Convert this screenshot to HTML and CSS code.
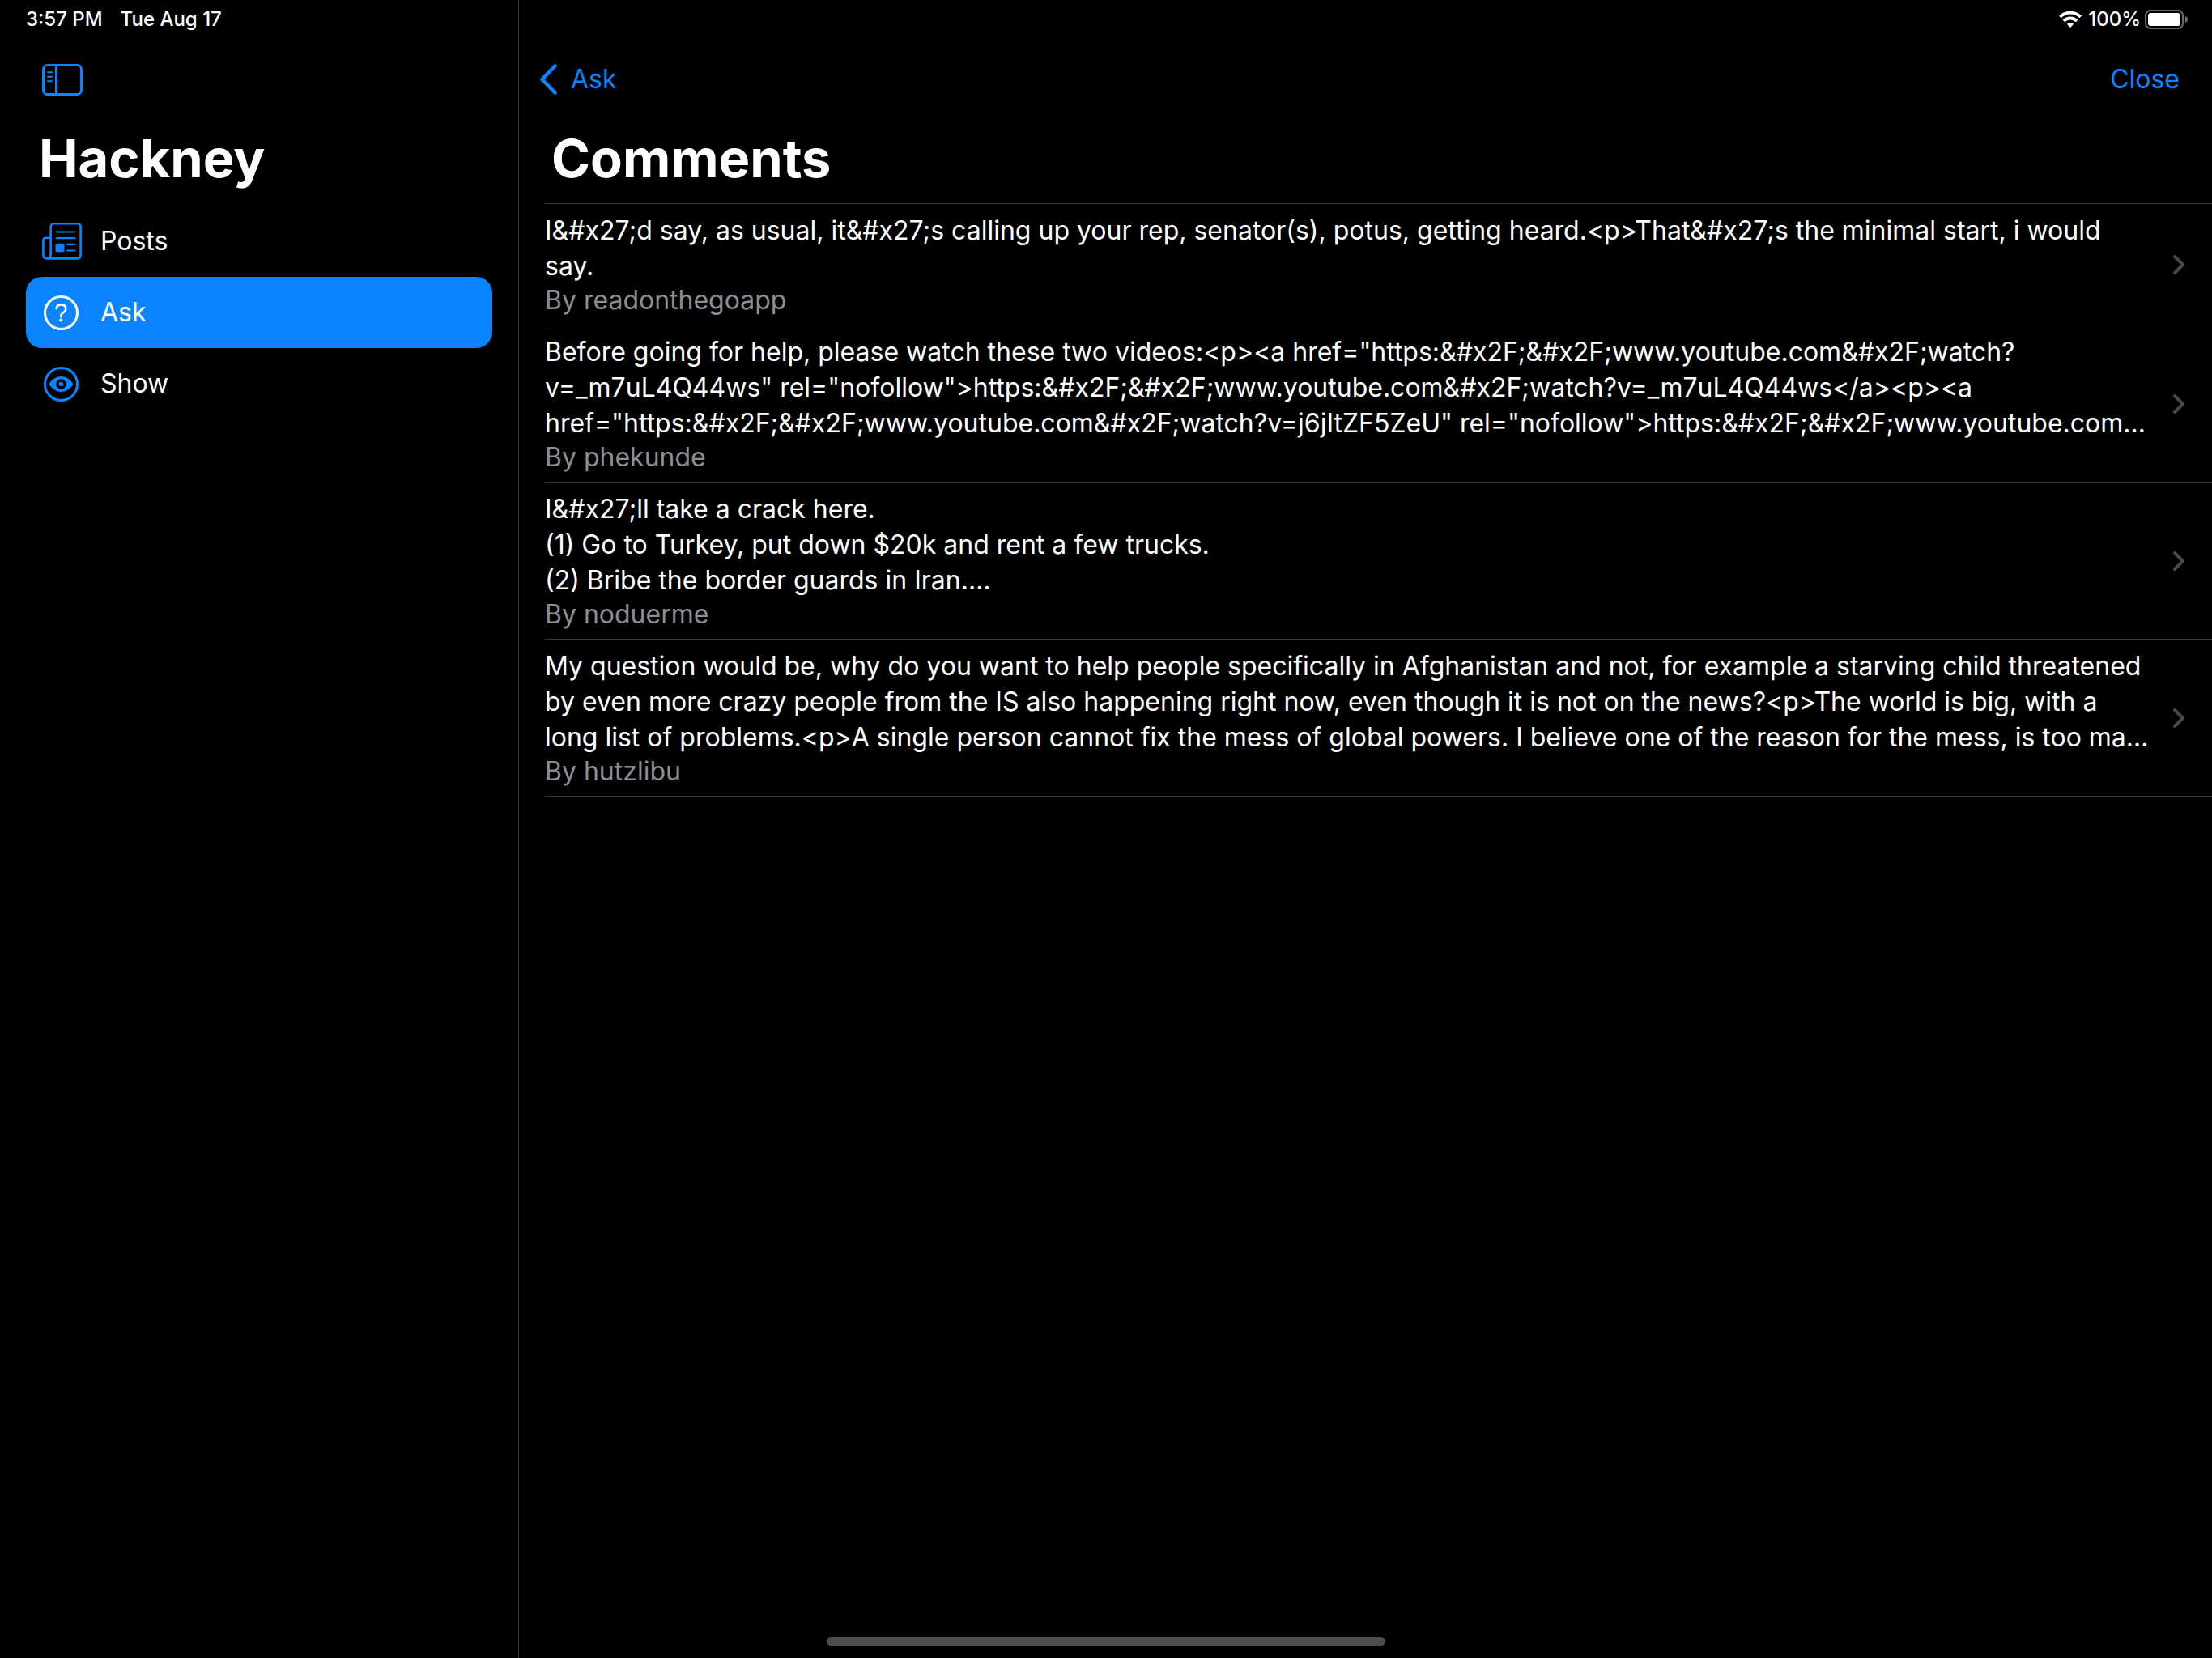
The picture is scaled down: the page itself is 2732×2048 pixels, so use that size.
FILE: index.html
```html
<!DOCTYPE html>
<html lang="en">
<head>
<meta charset="utf-8">
<meta name="viewport" content="width=device-width, initial-scale=1">
<title>Hackney</title>
<link rel="stylesheet" href="styles.css">
</head>
<body>
<div class="app">
  <aside class="sidebar">
    <div class="status"><span>3:57 PM</span><span>Tue Aug 17</span></div>
    <div class="toolbar toolbar-side">
      <button class="tool" type="button" aria-label="Toggle sidebar">
        <svg width="50" height="39" viewBox="0 0 50 39" fill="none" stroke="currentColor" stroke-width="3">
          <rect x="1.5" y="1.5" width="47" height="36" rx="5"/>
          <path d="M17.5 1.5v36"/>
          <path d="M7 10.2h5M7 15.7h5M7 21.2h5" stroke-width="2" stroke-linecap="round"/>
        </svg>
      </button>
    </div>
    <h1 class="title">Hackney</h1>
    <nav class="menu">
      <a class="item" href="#posts">
        <svg class="icon" width="50" height="48" viewBox="0 0 50 48" fill="none" stroke="currentColor" stroke-width="2.6">
          <path d="M10.6 41V6.500q0-4.200 4.200-4.200h28.600q4.200 0 4.200 4.200V41q0 4.400-4.400 4.400H6q-4.600 0-4.600-4.400V23.500q0-3.700 3.700-3.700h5.500"/>
          <path d="M10.600 40.500q0 4.900-4.600 4.900"/>
          <path d="M18 12.500h22.500M18 20.200h22.500M31 27.800h9.500M31 35.500h9.500" stroke-width="2.200" stroke-linecap="round"/>
          <rect x="16.500" y="26.700" width="11" height="10.500" rx="2.500" fill="currentColor" stroke="none"/>
        </svg>
        <span>Posts</span>
      </a>
      <a class="item selected" href="#ask" aria-current="page">
        <svg class="icon" width="50" height="48" viewBox="0 0 50 48" fill="none" stroke="currentColor" stroke-width="3">
          <circle cx="23.500" cy="24.500" r="20"/>
          <path d="M17.700 19.200q.5-4.800 5.700-4.800 5.800 0 5.800 5 0 2.700-2.900 4.600-3 1.900-3 4.700v.5" stroke-width="2.600" stroke-linecap="round" stroke-linejoin="round"/>
          <circle cx="23.200" cy="33.400" r="2" fill="currentColor" stroke="none"/>
        </svg>
        <span>Ask</span>
      </a>
      <a class="item" href="#show">
        <svg class="icon" width="50" height="48" viewBox="0 0 50 48" fill="none" stroke="currentColor" stroke-width="3">
          <circle cx="23.500" cy="24.500" r="20"/>
          <path d="M8.700 24.500c2.300-4.700 8.300-9.500 14.800-9.500s12.500 4.800 14.800 9.500c-2.300 4.700-8.300 9.500-14.800 9.500s-12.500-4.800-14.800-9.500zM23.500 18.200a6.300 6.300 0 1 0 0 12.600 6.300 6.300 0 0 0 0-12.600z" fill="currentColor" fill-rule="evenodd" stroke="none"/>
          <circle cx="23.500" cy="24.500" r="2.800" fill="currentColor" stroke="none"/>
        </svg>
        <span>Show</span>
      </a>
    </nav>
  </aside>

  <main class="detail">
    <div class="status status-end">
      <svg width="28" height="20" viewBox="0 0 28 20" fill="none" stroke="currentColor" stroke-width="3.800" role="img" aria-label="Wi-Fi">
        <path d="M1.300 6.900a18 18 0 0 1 25.400 0"/>
        <path d="M5.800 11.900a11.600 11.600 0 0 1 16.400 0"/>
        <path d="M14 20l-4.200-4.200a6 6 0 0 1 8.400 0z" fill="currentColor" stroke="none"/>
      </svg>
      <span class="percent">100%</span>
      <svg width="54" height="24" viewBox="0 0 54 24" role="img" aria-label="Battery full">
        <rect x="1" y="1" width="46" height="22" rx="6" fill="none" stroke="#6b6b6b" stroke-width="2"/>
        <rect x="4" y="4" width="40" height="16" rx="3.500" fill="#fff"/>
        <path d="M50 8q3 1 3 4t-3 4z" fill="#6b6b6b"/>
      </svg>
    </div>
    <div class="toolbar toolbar-main">
      <button class="tool back" type="button">
        <svg width="24" height="40" viewBox="0 0 24 40" fill="none" stroke="currentColor" stroke-width="4.600" stroke-linecap="round" stroke-linejoin="round"><path d="M20.500 3.500L4.500 20l16 16.500"/></svg>
        <span>Ask</span>
      </button>
      <button class="tool" type="button">Close</button>
    </div>
    <h2 class="title title-main">Comments</h2>
    <ul class="comments">
      <li class="row">
        <a class="comment" href="#c1">
          <span class="body">
            <span class="text">I&amp;#x27;d say, as usual, it&amp;#x27;s calling up your rep, senator(s), potus, getting heard.&lt;p&gt;That&amp;#x27;s the minimal start, i would<br>say.</span>
            <span class="author">By readonthegoapp</span>
          </span>
          <svg class="chevron" width="16" height="26" viewBox="0 0 16 26"><path d="M3 3l10 10L3 23"/></svg>
        </a>
      </li>
      <li class="row">
        <a class="comment" href="#c2">
          <span class="body">
            <span class="text">Before going for help, please watch these two videos:&lt;p&gt;&lt;a href="https:&amp;#x2F;&amp;#x2F;www.youtube.com&amp;#x2F;watch?<br>v=_m7uL4Q44ws" rel="nofollow"&gt;https:&amp;#x2F;&amp;#x2F;www.youtube.com&amp;#x2F;watch?v=_m7uL4Q44ws&lt;/a&gt;&lt;p&gt;&lt;a<br>href="https:&amp;#x2F;&amp;#x2F;www.youtube.com&amp;#x2F;watch?v=j6jItZF5ZeU" rel="nofollow"&gt;https:&amp;#x2F;&amp;#x2F;www.youtube.com…</span>
            <span class="author">By phekunde</span>
          </span>
          <svg class="chevron" width="16" height="26" viewBox="0 0 16 26"><path d="M3 3l10 10L3 23"/></svg>
        </a>
      </li>
      <li class="row">
        <a class="comment" href="#c3">
          <span class="body">
            <span class="text">I&amp;#x27;ll take a crack here.<br>(1) Go to Turkey, put down $20k and rent a few trucks.<br>(2) Bribe the border guards in Iran.…</span>
            <span class="author">By noduerme</span>
          </span>
          <svg class="chevron" width="16" height="26" viewBox="0 0 16 26"><path d="M3 3l10 10L3 23"/></svg>
        </a>
      </li>
      <li class="row">
        <a class="comment" href="#c4">
          <span class="body">
            <span class="text">My question would be, why do you want to help people specifically in Afghanistan and not, for example a starving child threatened<br>by even more crazy people from the IS also happening right now, even though it is not on the news?&lt;p&gt;The world is big, with a<br>long list of problems.&lt;p&gt;A single person cannot fix the mess of global powers. I believe one of the reason for the mess, is too ma…</span>
            <span class="author">By hutzlibu</span>
          </span>
          <svg class="chevron" width="16" height="26" viewBox="0 0 16 26"><path d="M3 3l10 10L3 23"/></svg>
        </a>
      </li>
    </ul>
  </main>
</div>
<div class="home-indicator"></div>
</body>
</html>
```

FILE: styles.css
```css
* {
  box-sizing: border-box;
}

body {
  margin: 0;
  background: #000;
  color: #fff;
  font-family: Inter, "Liberation Sans", sans-serif;
  font-size: 32px;
  line-height: 44px;
}

a {
  color: inherit;
  text-decoration: none;
}

.app {
  display: grid;
  grid-template-columns: 641px minmax(0, 1fr);
  min-height: 100vh;
}

.sidebar {
  border-right: 1px solid #38383a;
}

.status {
  display: flex;
  align-items: center;
  gap: 22px;
  height: 48px;
  padding: 0 32px;
  font-size: 24px;
  font-weight: 500;
  line-height: 32px;
}

.status-end {
  justify-content: flex-end;
  gap: 5px;
  padding: 0 29px;
}

.percent {
  padding-left: 3px;
}

.toolbar {
  display: flex;
  align-items: center;
  justify-content: space-between;
  height: 100px;
}

.toolbar-side {
  padding: 0 52px;
}

.toolbar-main {
  padding: 0 40px 0 24px;
}

.tool {
  display: flex;
  align-items: center;
  padding: 0;
  border: 0;
  background: none;
  color: #0a84ff;
  font: inherit;
  cursor: pointer;
}

.back {
  gap: 16px;
}

.title {
  margin: 0;
  padding: 8px 48px 15px;
  font-size: 65px;
  font-weight: 700;
  line-height: 80px;
}

.title-main {
  padding: 8px 40px 15px;
}

.menu {
  display: flex;
  flex-direction: column;
  padding: 3px 32px;
}

.item {
  display: flex;
  align-items: center;
  gap: 22px;
  height: 88px;
  padding: 0 20px;
  border-radius: 20px;
}

.icon {
  color: #0a84ff;
}

.selected {
  background: #0a84ff;
}

.selected .icon {
  color: #fff;
}

.comments {
  margin: 0;
  padding: 0 0 0 32px;
  border: 0;
  list-style: none;
}

.row {
  border-bottom: 1px solid #38383a;
}

.row:first-child {
  border-top: 1px solid #38383a;
}

.comment {
  display: flex;
  align-items: center;
  justify-content: space-between;
  padding: 11px 33px 10px 0;
}

.body {
  display: flex;
  flex-direction: column;
  white-space: nowrap;
}

.author {
  color: #8d8d93;
  line-height: 40px;
}

.chevron {
  flex: none;
  fill: none;
  stroke: #48484a;
  stroke-width: 4;
  stroke-linecap: round;
  stroke-linejoin: round;
}

.home-indicator {
  position: fixed;
  bottom: 15px;
  left: 50%;
  width: 690px;
  height: 11px;
  border-radius: 6px;
  background: #4d4d4d;
  transform: translateX(-50%);
}
```
